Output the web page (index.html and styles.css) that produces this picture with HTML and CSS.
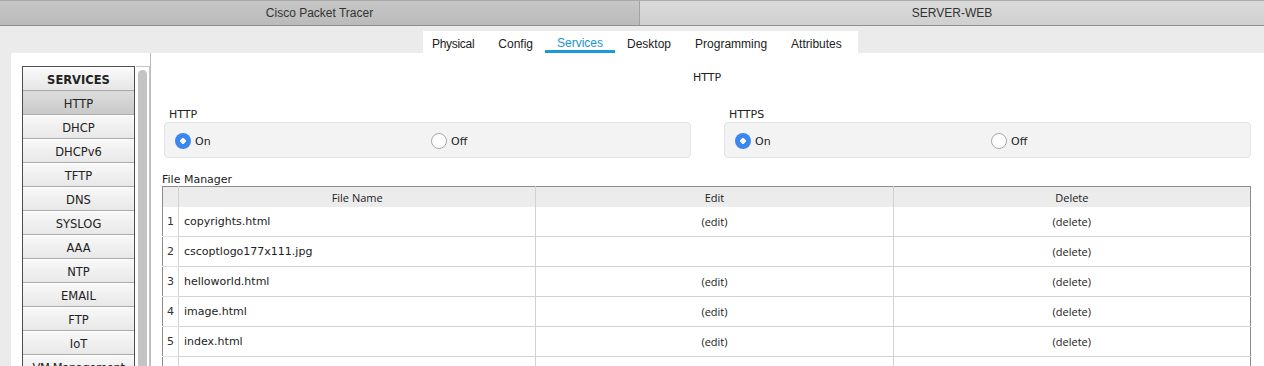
FILE: index.html
```html
<!DOCTYPE html>
<html lang="en">
<head>
    <meta charset="UTF-8">
    <title>SERVER-WEB</title>
    <link rel="stylesheet" href="styles.css">
</head>
<body>
    <div class="titlebar">
        <div class="win-tab back">Cisco Packet Tracer</div>
        <div class="win-tab front">SERVER-WEB</div>
    </div>
    <div class="window">
        <div class="tabs">
            <span class="tab">Physical</span>
            <span class="tab">Config</span>
            <span class="tab active">Services</span>
            <span class="tab">Desktop</span>
            <span class="tab">Programming</span>
            <span class="tab">Attributes</span>
        </div>
        <div class="panel">
            <div class="side">
                <ul class="services">
                    <li class="head">SERVICES</li>
                    <li class="selected">HTTP</li>
                    <li>DHCP</li>
                    <li>DHCPv6</li>
                    <li>TFTP</li>
                    <li>DNS</li>
                    <li>SYSLOG</li>
                    <li>AAA</li>
                    <li>NTP</li>
                    <li>EMAIL</li>
                    <li>FTP</li>
                    <li>IoT</li>
                    <li class="long">VM Management</li>
                </ul>
                <div class="scroll"><div class="thumb"></div></div>
            </div>
            <div class="content">
                <h3 class="page-title">HTTP</h3>
                <div class="groups">
                    <div class="group">
                        <div class="group-label">HTTP</div>
                        <div class="group-box">
                            <label class="radio"><span class="dot on"></span>On</label>
                            <label class="radio"><span class="dot"></span>Off</label>
                        </div>
                    </div>
                    <div class="group">
                        <div class="group-label">HTTPS</div>
                        <div class="group-box">
                            <label class="radio"><span class="dot on"></span>On</label>
                            <label class="radio"><span class="dot"></span>Off</label>
                        </div>
                    </div>
                </div>
                <div class="fm-label">File Manager</div>
                <table class="files">
                    <tr>
                        <th class="num"></th>
                        <th class="col">File Name</th>
                        <th class="col">Edit</th>
                        <th class="col">Delete</th>
                    </tr>
                    <tr>
                        <td class="num">1</td>
                        <td class="name">copyrights.html</td>
                        <td class="act">(edit)</td>
                        <td class="act">(delete)</td>
                    </tr>
                    <tr>
                        <td class="num">2</td>
                        <td class="name">cscoptlogo177x111.jpg</td>
                        <td class="act"></td>
                        <td class="act">(delete)</td>
                    </tr>
                    <tr>
                        <td class="num">3</td>
                        <td class="name">helloworld.html</td>
                        <td class="act">(edit)</td>
                        <td class="act">(delete)</td>
                    </tr>
                    <tr>
                        <td class="num">4</td>
                        <td class="name">image.html</td>
                        <td class="act">(edit)</td>
                        <td class="act">(delete)</td>
                    </tr>
                    <tr>
                        <td class="num">5</td>
                        <td class="name">index.html</td>
                        <td class="act">(edit)</td>
                        <td class="act">(delete)</td>
                    </tr>
                    <tr class="blank">
                        <td class="num"></td>
                        <td></td>
                        <td></td>
                        <td></td>
                    </tr>
                </table>
            </div>
        </div>
    </div>
</body>
</html>
```

FILE: styles.css
```css
body {
    margin: 0;
    height: 366px;
    overflow: hidden;
    font-family: "Liberation Sans", Arial, sans-serif;
    color: #222;
    background-color: #ebebeb;
}

.titlebar {
    display: flex;
    height: 26px;
    border-top: 1px solid #a9a9a9;
    border-bottom: 1px solid #8f8f8f;
    box-sizing: border-box;
}

.win-tab {
    display: flex;
    align-items: center;
    justify-content: center;
    font-size: 12px;
    color: #333;
}

.win-tab.back {
    width: 639px;
    background: linear-gradient(#c6c6c6, #bababa);
    border-right: 1px solid #a3a3a3;
}

.win-tab.front {
    flex: 1;
    background: linear-gradient(#dadada, #d0d0d0);
}

.window {
    padding-top: 5px;
}

.tabs {
    display: flex;
    margin-left: 423px;
    width: 435px;
    height: 22px;
    background-color: #fff;
    box-sizing: border-box;
}

.tab {
    font-size: 12px;
    color: #222;
    padding: 6px 12px 0;
    height: 16px;
    white-space: nowrap;
}

.tab:first-child {
    padding-left: 9px;
    letter-spacing: -0.3px;
}

.tab.active {
    color: #1a93d4;
    border-bottom: 3px solid #1a9ad8;
    height: 13px;
    line-height: 13px;
}

.panel {
    display: flex;
    margin-left: 11px;
    background-color: #fff;
    height: 320px;
}

.side {
    display: flex;
    padding: 13px 0 0 11px;
    border-right: 1px solid #bcbcbc;
    align-items: flex-start;
    height: 330px;
}

.services {
    list-style: none;
    margin: 0;
    padding: 0;
    width: 111px;
    border: 1px solid #4d4d4d;
    font-family: "DejaVu Sans", sans-serif;
    font-size: 11.5px;
}

.services li {
    height: 22px;
    line-height: 24px;
    text-align: center;
    background: linear-gradient(#f8f8f8, #e8e8e8);
    border-top: 1px solid #fff;
    border-bottom: 1px solid #ababab;
    color: #222;
    white-space: nowrap;
}

.services li.head {
    font-weight: bold;
    background: linear-gradient(#fafafa, #e6e6e6);
}

.services li.selected {
    background: linear-gradient(#dcdcdc, #c9c9c9);
    border-top-color: #d6d6d6;
}

.services li.long {
    letter-spacing: -0.4px;
}

.scroll {
    width: 14px;
    height: 320px;
    border: 1px solid #c4c4c4;
    border-left: none;
    box-sizing: border-box;
    margin-left: 1px;
    padding: 3px 2px;
}

.thumb {
    width: 9px;
    height: 300px;
    background-color: #c4c4c4;
    border-radius: 5px;
}

.content {
    flex: 1;
    padding: 0 15px 0 13px;
    font-family: "DejaVu Sans", sans-serif;
}

.page-title {
    margin: 18px 0 0;
    font-weight: normal;
    font-size: 11px;
    text-align: center;
    padding-right: 1px;
}

.groups {
    display: flex;
    gap: 33px;
    margin-top: 24px;
}

.group {
    flex: 1;
}

.group-label {
    font-size: 11px;
    padding-left: 5px;
    margin-bottom: 1px;
}

.group-box {
    display: flex;
    height: 36px;
    background-color: #f3f3f3;
    border: 1px solid #e3e3e3;
    border-radius: 4px;
    box-sizing: border-box;
    align-items: center;
    padding-left: 10px;
}

.radio {
    flex: 1;
    display: flex;
    align-items: center;
    font-size: 11px;
    gap: 4px;
    padding-top: 2px;
}

.radio:last-child {
    margin-left: -3px;
}

.dot {
    width: 14px;
    height: 14px;
    border-radius: 50%;
    border: 1px solid #a8a8a8;
    background-color: #fff;
}

.dot.on {
    width: 16px;
    height: 16px;
    border: none;
    background: radial-gradient(circle, #fff 0 2.5px, #3a87f2 3px);
}

.fm-label {
    font-size: 11px;
    margin: 15px 0 0 -2px;
}

.files {
    border-collapse: collapse;
    width: 1089px;
    margin-left: -2px;
    border: 1px solid #8c8c8c;
    font-size: 11px;
    table-layout: fixed;
}

.files th {
    height: 20px;
    background-color: #ececec;
    font-weight: normal;
    font-family: "Open Sans", sans-serif;
    font-size: 11px;
    padding: 0;
    border-left: 1px solid #d2d2d2;
}

.files th.num {
    width: 15px;
    border-left: none;
}

.files td {
    height: 29px;
    padding: 0;
    border: 1px solid #d2d2d2;
    border-top: none;
}

.files td.num {
    text-align: center;
    font-size: 11px;
    border-left: none;
    border-right: none;
    border-bottom-color: #e0e0e0;
    color: #333;
}

.files td.name {
    padding-left: 5px;
}

.files td.act {
    text-align: center;
    font-family: "Open Sans", sans-serif;
    font-size: 11px;
}

.files td:last-child {
    border-right: none;
}

.files tr.blank td {
    border-bottom: none;
}
```
